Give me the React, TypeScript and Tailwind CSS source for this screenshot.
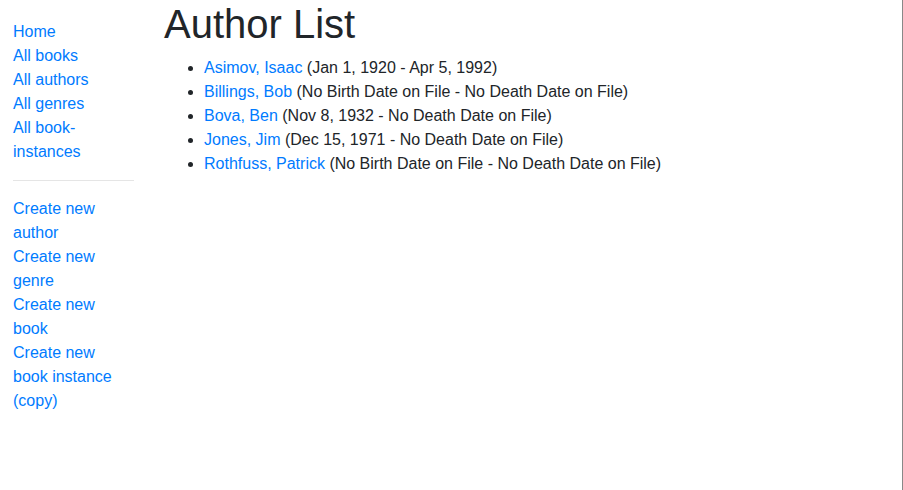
import React from 'react';

const navTop = ['Home', 'All books', 'All authors', 'All genres', 'All book-instances'];
const navBottom = ['Create new author', 'Create new genre', 'Create new book', 'Create new book instance (copy)'];

const authors = [
  { name: 'Asimov, Isaac', dates: '(Jan 1, 1920 - Apr 5, 1992)' },
  { name: 'Billings, Bob', dates: '(No Birth Date on File - No Death Date on File)' },
  { name: 'Bova, Ben', dates: '(Nov 8, 1932 - No Death Date on File)' },
  { name: 'Jones, Jim', dates: '(Dec 15, 1971 - No Death Date on File)' },
  { name: 'Rothfuss, Patrick', dates: '(No Birth Date on File - No Death Date on File)' },
];

export default function App() {
  return (
    <div className="flex h-[490px] w-full border-r border-[#888] bg-white text-base leading-6 text-[#212529] [font-family:'Liberation_Sans',Arial,sans-serif]">
      {/* Sidebar */}
      <nav className="ml-[13px] mt-5 w-[121px] shrink-0">
        <ul className="w-[112px]">
          {navTop.map((item) => (
            <li key={item}>
              <a href="#" className="text-[#007bff] hover:underline">{item}</a>
            </li>
          ))}
        </ul>
        <hr className="my-4 border-t border-black/10" />
        <ul className="w-[112px]">
          {navBottom.map((item) => (
            <li key={item}>
              <a href="#" className="text-[#007bff] hover:underline">{item}</a>
            </li>
          ))}
        </ul>
      </nav>

      {/* Main */}
      <main className="ml-[30px] flex-1">
        <h1 className="mb-2 text-[40px] font-medium leading-[48px]">Author List</h1>
        <ul className="list-disc pl-10">
          {authors.map((a) => (
            <li key={a.name}>
              <a href="#" className="text-[#007bff] hover:underline">{a.name}</a> {a.dates}
            </li>
          ))}
        </ul>
      </main>
    </div>
  );
}
